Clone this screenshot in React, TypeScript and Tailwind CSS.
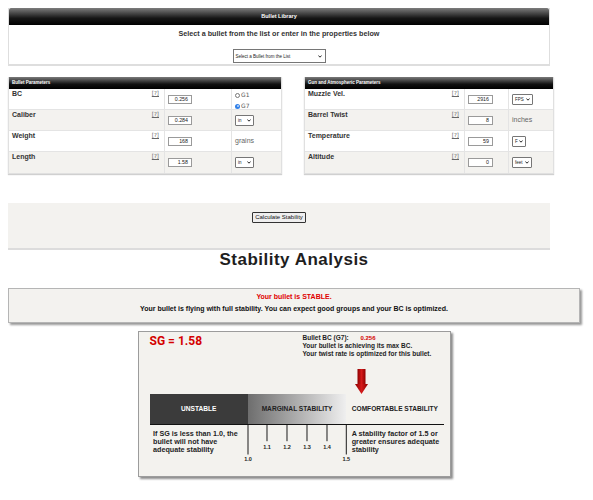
import React from "react";

type Row = { label: string; value: string; extra: React.ReactNode };

function Chevron() {
  return (
    <svg width="4" height="3" viewBox="0 0 4 3" className="block">
      <path d="M0.4 0.5 L2 2.2 L3.6 0.5" fill="none" stroke="#111" strokeWidth="0.9" />
    </svg>
  );
}

function MiniSelect({ text, w }: { text: string; w: string }) {
  return (
    <div className={`flex h-[11px] ${w} items-center justify-between rounded-[1px] border border-[#767676] bg-white px-[2px]`}>
      <span className="text-[4.5px] leading-[5px] text-[#222]">{text}</span>
      <Chevron />
    </div>
  );
}

function Unit({ text }: { text: string }) {
  return <span className="text-[7px] leading-[8px] text-[#666]">{text}</span>;
}

function Help() {
  return (
    <span className="font-['DejaVu_Sans',sans-serif] text-[5.5px] leading-[9px] text-[#666] underline decoration-[0.6px] underline-offset-[1px]">
      [?]
    </span>
  );
}

function Radios() {
  return (
    <div className="flex flex-col gap-[3px] self-start pt-[2px] font-['DejaVu_Sans',sans-serif] text-[6px] leading-[8px] text-[#555]">
      <div className="flex items-center gap-[1px]">
        <span className="h-[5px] w-[5px] rounded-full border-[0.8px] border-[#777] bg-white" />
        <span>G1</span>
      </div>
      <div className="flex items-center gap-[1px]">
        <span className="flex h-[5px] w-[5px] items-center justify-center rounded-full bg-[#2f7fe8]">
          <span className="h-[2px] w-[2px] rounded-full bg-[#bcd6fa]" />
        </span>
        <span>G7</span>
      </div>
    </div>
  );
}

function Header({ title }: { title: string }) {
  return (
    <div className="flex h-[12px] items-center bg-[linear-gradient(#7a7a7a,#111_60%,#000)] pl-[3px] text-[4.5px] font-bold text-white">
      {title}
    </div>
  );
}

function LeftTable({ rows }: { rows: Row[] }) {
  return (
    <div className="w-[274px] border border-t-0 border-[#e0e0e0] shadow-[0_1px_1px_#d0d0d0]">
      <Header title="Bullet Parameters" />
      {rows.map((r, i) => (
        <div
          key={r.label}
          className={`grid h-[21px] grid-cols-[155px_67px_52px] border-b border-[#e4e4e4] last:border-b-0 ${i % 2 ? "bg-[#f3f2ef]" : "bg-white"}`}
        >
          <div className="flex justify-between pl-[3px] pr-[5px]">
            <span className="text-[7px] font-bold leading-[9px] text-[#333]">{r.label}</span>
            <Help />
          </div>
          <div className="flex items-center border-l border-[#e4e4e4] pl-[3px]">
            <div className="h-[9px] w-[24px] border border-[#9a9a9a] bg-white pr-[3px] text-right text-[5.3px] leading-[7px] text-[#222]">
              {r.value}
            </div>
          </div>
          <div className="flex items-center border-l border-[#e4e4e4] pl-[3px]">{r.extra}</div>
        </div>
      ))}
    </div>
  );
}

function RightTable({ rows }: { rows: Row[] }) {
  return (
    <div className="w-[250px] border border-t-0 border-[#e0e0e0] shadow-[0_1px_1px_#d0d0d0]">
      <Header title="Gun and Atmospheric Parameters" />
      {rows.map((r, i) => (
        <div
          key={r.label}
          className={`grid h-[21px] grid-cols-[159px_44px_47px] border-b border-[#e4e4e4] last:border-b-0 ${i % 2 ? "bg-[#f3f2ef]" : "bg-white"}`}
        >
          <div className="flex justify-between pl-[3px] pr-[5px]">
            <span className="text-[7px] font-bold leading-[9px] text-[#333]">{r.label}</span>
            <Help />
          </div>
          <div className="flex items-center border-l border-[#e4e4e4] pl-[3px]">
            <div className="h-[9px] w-[25px] border border-[#9a9a9a] bg-white pr-[3px] text-right text-[5.3px] leading-[7px] text-[#222]">
              {r.value}
            </div>
          </div>
          <div className="flex items-center border-l border-[#e4e4e4] pl-[3px]">{r.extra}</div>
        </div>
      ))}
    </div>
  );
}

function Arrow() {
  return (
    <svg width="13" height="25" viewBox="0 0 13 25" className="ml-[216px] block">
      <defs>
        <linearGradient id="arrowFill" x1="0" x2="1" y1="0" y2="0">
          <stop offset="0" stopColor="#8e0000" />
          <stop offset="0.5" stopColor="#d41a1a" />
          <stop offset="1" stopColor="#8e0000" />
        </linearGradient>
      </defs>
      <rect x="2.5" y="0" width="8" height="15.5" fill="url(#arrowFill)" />
      <polygon points="0,15 13,15 6.5,25" fill="url(#arrowFill)" />
    </svg>
  );
}

function Scale() {
  const minor = [
    { x: 19, t: "1.1" },
    { x: 39, t: "1.2" },
    { x: 59, t: "1.3" },
    { x: 79, t: "1.4" },
  ];
  return (
    <svg width="98.3" height="40" viewBox="0 0 98.3 40" className="block overflow-visible">
      <line x1="0" y1="0" x2="0" y2="29.5" stroke="#1a1a1a" strokeWidth="1" />
      <line x1="98.3" y1="0" x2="98.3" y2="29.5" stroke="#1a1a1a" strokeWidth="1" />
      {minor.map((m) => (
        <g key={m.t}>
          <line x1={m.x} y1="0" x2={m.x} y2="16.2" stroke="#1a1a1a" strokeWidth="1" />
          <text
            x={m.x}
            y="24.4"
            textAnchor="middle"
            fontSize="5.5"
            fontWeight="bold"
            fontFamily="'Liberation Sans', Arial, sans-serif"
            fill="#222"
          >
            {m.t}
          </text>
        </g>
      ))}
      <text x="0" y="36.4" textAnchor="middle" fontSize="5.5" fontWeight="bold" fontFamily="'Liberation Sans', Arial, sans-serif" fill="#222">
        1.0
      </text>
      <text x="98.3" y="36.4" textAnchor="middle" fontSize="5.5" fontWeight="bold" fontFamily="'Liberation Sans', Arial, sans-serif" fill="#222">
        1.5
      </text>
    </svg>
  );
}

function StabilityChart() {
  return (
    <div className="mx-auto h-[146px] w-[313px] border border-[#9c9c9c] bg-[#f3f2ee] shadow-[2px_2px_2px_rgba(0,0,0,0.45)]">
      <div className="flex h-[37px]">
        <div className="w-[164px] pl-[11px] pt-[2px] font-['Roboto',sans-serif] text-[12px] font-bold leading-[14px] text-[#d40000]">
          SG = 1.58
        </div>
        <div className="whitespace-nowrap pt-[1.5px] text-[6.5px] font-bold leading-[8px] text-[#1e1e1e]">
          <div className="flex">
            <span className="w-[58px]">Bullet BC (G7):</span>
            <span className="text-[6px] text-[#d40000]">0.256</span>
          </div>
          <div>Your bullet is achieving its max BC.</div>
          <div>Your twist rate is optimized for this bullet.</div>
        </div>
      </div>
      <Arrow />
      <div className="ml-[11px] flex h-[30.5px] w-[294px] border-b-[1.5px] border-[#111] text-[6.6px] font-bold">
        <div className="flex w-[98.4px] items-center justify-center bg-[#3b3b3b] text-white">UNSTABLE</div>
        <div className="flex w-[98.3px] items-center justify-center bg-[linear-gradient(90deg,#6e6e6e,#b4b4b4_55%,#efefef)] text-[#222]">
          MARGINAL STABILITY
        </div>
        <div className="flex flex-1 items-center justify-center text-[#222]">COMFORTABLE STABILITY</div>
      </div>
      <div className="ml-[11px] flex w-[294px]">
        <div className="w-[98.4px] whitespace-nowrap pl-[3.5px] pt-[5.3px] text-[7.2px] font-bold leading-[8.3px] text-[#1e1e1e]">
          If SG is less than 1.0, the
          <br />
          bullet will not have
          <br />
          adequate stability
        </div>
        <div className="w-[98.3px]">
          <Scale />
        </div>
        <div className="flex-1 whitespace-nowrap pl-[5.5px] pt-[5.3px] text-[7.2px] font-bold leading-[8.3px] text-[#1e1e1e]">
          A stability factor of 1.5 or
          <br />
          greater ensures adequate
          <br />
          stability
        </div>
      </div>
    </div>
  );
}

export default function App() {
  const bullet: Row[] = [
    { label: "BC", value: "0.256", extra: <Radios /> },
    { label: "Caliber", value: "0.284", extra: <MiniSelect text="in" w="w-[19px]" /> },
    { label: "Weight", value: "168", extra: <Unit text="grains" /> },
    { label: "Length", value: "1.58", extra: <MiniSelect text="in" w="w-[19px]" /> },
  ];
  const gun: Row[] = [
    { label: "Muzzle Vel.", value: "2916", extra: <MiniSelect text="FPS" w="w-[21px]" /> },
    { label: "Barrel Twist", value: "8", extra: <Unit text="inches" /> },
    { label: "Temperature", value: "59", extra: <MiniSelect text="F" w="w-[14px]" /> },
    { label: "Altitude", value: "0", extra: <MiniSelect text="feet" w="w-[20px]" /> },
  ];

  return (
    <div className="min-h-[500px] w-[593px] bg-white px-2 pt-2 font-['Liberation_Sans',Arial,sans-serif] text-[#333]">
      {/* Bullet library */}
      <div className="w-[542px] border-x border-b-2 border-[#dedede] bg-white">
        <div className="flex h-[17px] items-center justify-center rounded-t-[2px] bg-[linear-gradient(#7d7d7d,#161616_60%,#000)] text-[5.5px] font-bold text-white">
          Bullet Library
        </div>
        <div className="flex h-[39px] flex-col items-center">
          <div className="mt-[5px] text-[7.2px] font-bold leading-[8px] text-[#333]">
            Select a bullet from the list or enter in the properties below
          </div>
          <div className="mt-[11px] flex h-[14px] w-[93px] items-center justify-between border border-[#767676] bg-white pl-[2px] pr-[3px]">
            <span className="text-[4.5px] leading-[5px] text-[#222]">Select a Bullet from the List</span>
            <Chevron />
          </div>
        </div>
      </div>

      {/* Parameter tables */}
      <div className="mt-[11px] flex gap-[22px]">
        <LeftTable rows={bullet} />
        <RightTable rows={gun} />
      </div>

      {/* Calculate */}
      <div className="mt-[29px] flex h-[47px] w-[542px] justify-center border-b-2 border-[#dcdcdc] bg-[#f3f2ef] pt-[9px]">
        <div className="flex h-[11px] w-[54px] items-center justify-center rounded-[1px] border border-[#333] bg-[#efefef] text-[6px] leading-[7px] text-[#111]">
          Calculate Stability
        </div>
      </div>

      <div className="mt-[1px] w-[572px] text-center text-[17px] font-bold leading-[17px] tracking-[0.5px] text-[#1e1e1e]">
        Stability Analysis
      </div>

      {/* Result message */}
      <div className="mt-[20px] h-[35px] w-[572px] border border-[#b5b5b5] bg-[#f3f2ef] pt-[2px] text-center text-[7px] font-bold leading-[12px] shadow-[2px_2px_2px_#999]">
        <div className="text-[#e00000]">Your bullet is STABLE.</div>
        <div className="text-[#111]">Your bullet is flying with full stability. You can expect good groups and your BC is optimized.</div>
      </div>

      <div className="mt-[8px] w-[572px]">
        <StabilityChart />
      </div>
    </div>
  );
}
